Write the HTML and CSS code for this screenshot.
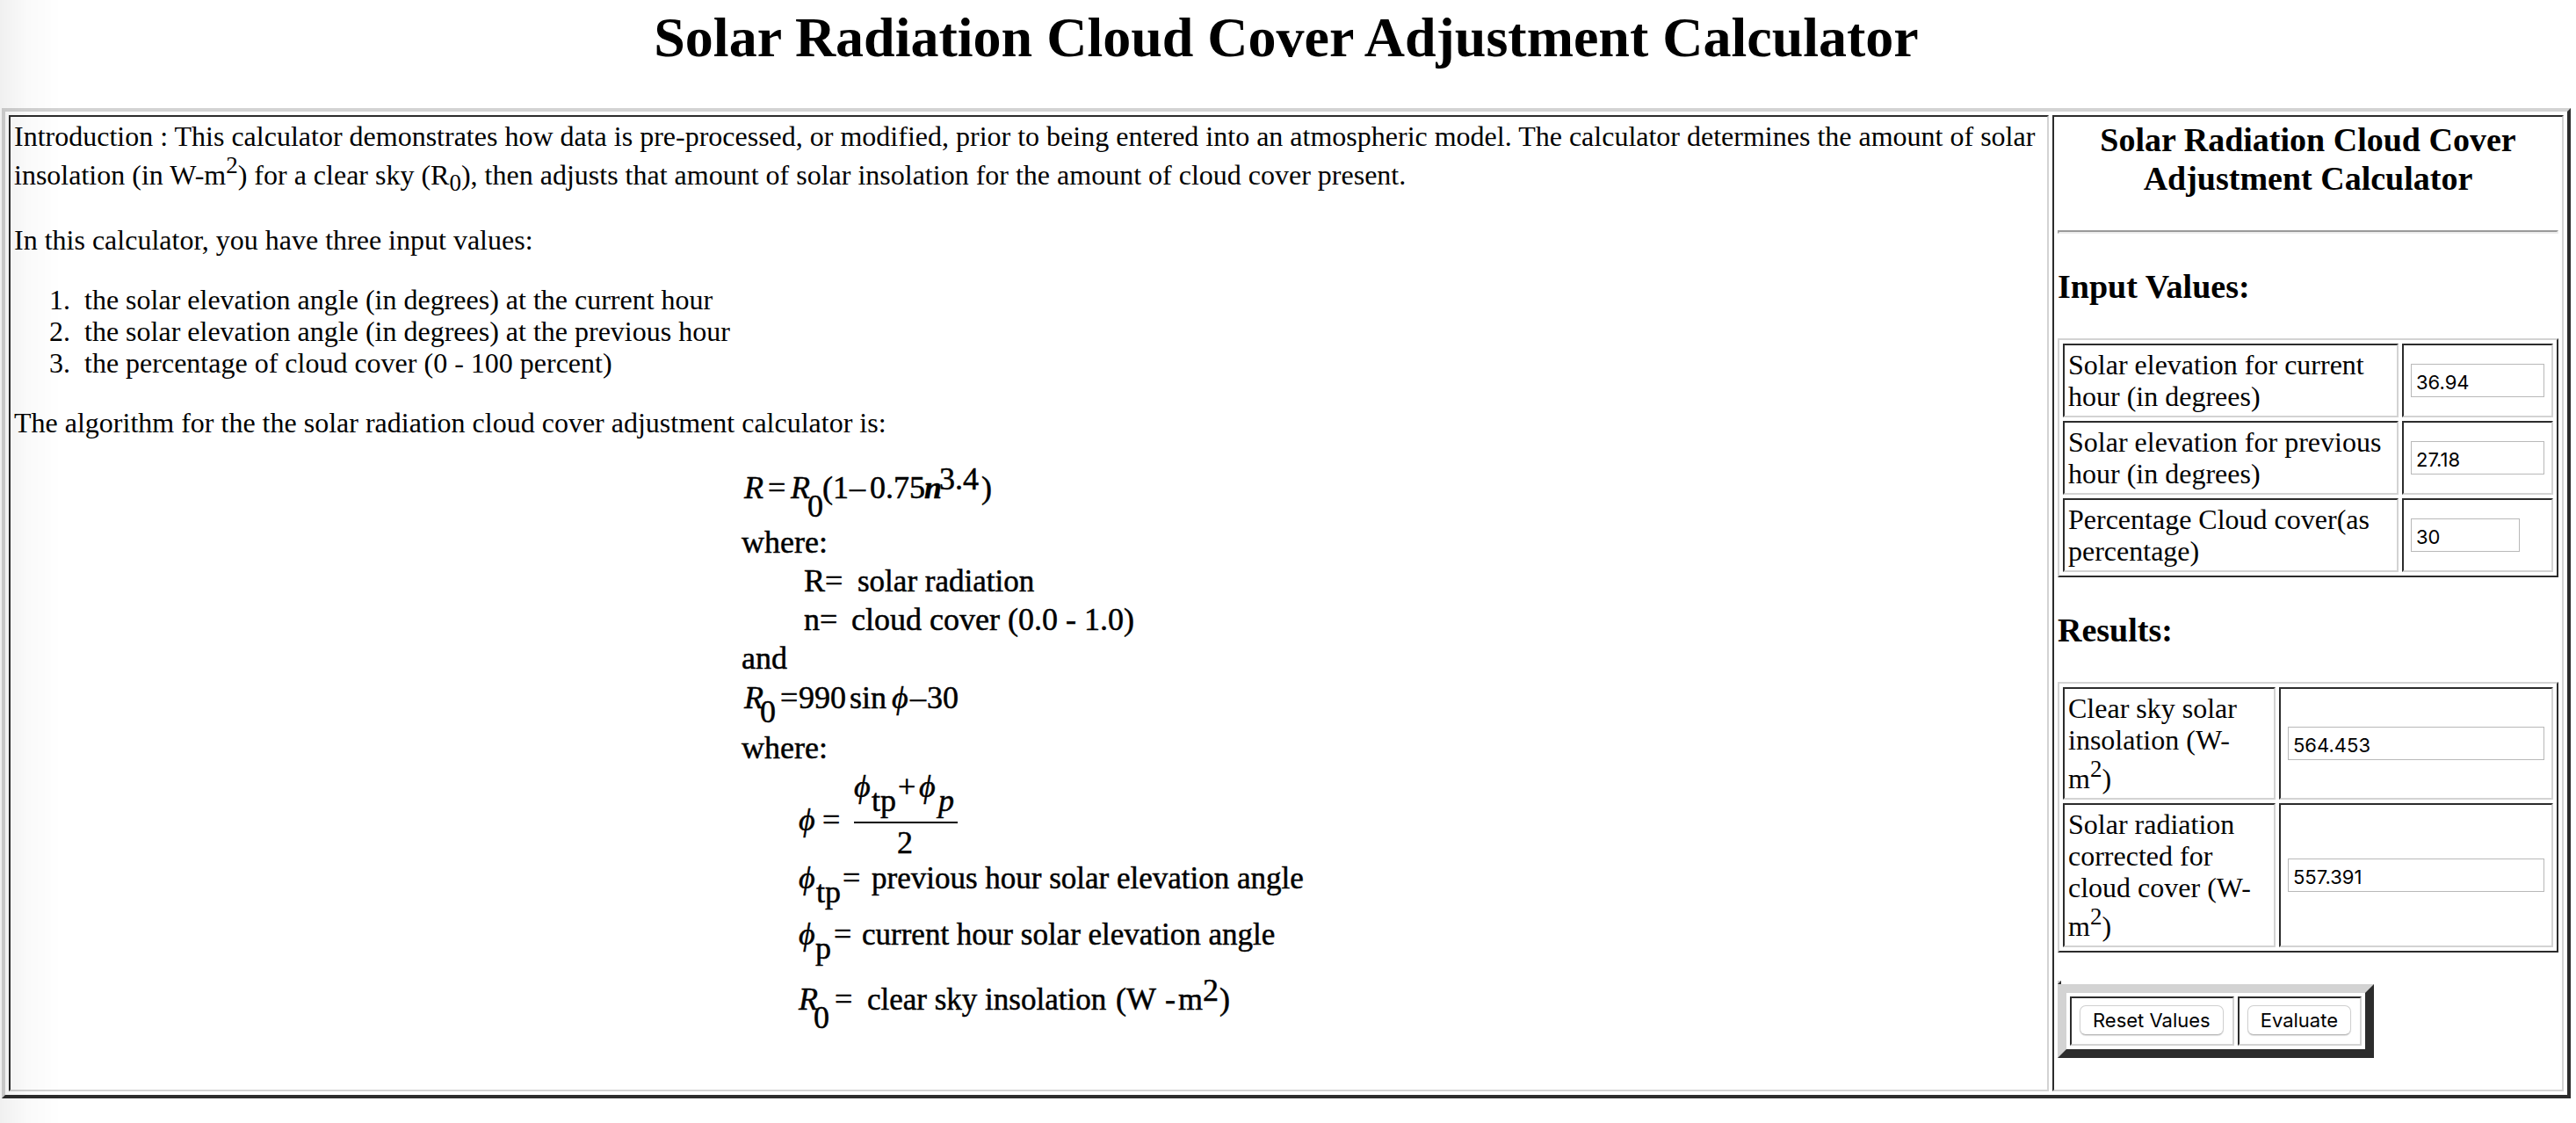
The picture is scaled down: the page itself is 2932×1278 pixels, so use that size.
FILE: index.html
```html
<!DOCTYPE html>
<html lang="en">
<head>
<meta charset="utf-8">
<title>Solar Radiation Cloud Cover Adjustment Calculator</title>
<link rel="stylesheet" href="styles.css">
</head>
<body>
<h1>Solar Radiation Cloud Cover Adjustment Calculator</h1>
<div class="frame">
  <main class="panel">
    <p>Introduction : This calculator demonstrates how data is pre-processed, or modified, prior to being entered into an atmospheric model. The calculator determines the amount of solar insolation (in W-m<sup>2</sup>) for a clear sky (R<sub>0</sub>), then adjusts that amount of solar insolation for the amount of cloud cover present.</p>
    <p>In this calculator, you have three input values:</p>
    <ol>
      <li>the solar elevation angle (in degrees) at the current hour</li>
      <li>the solar elevation angle (in degrees) at the previous hour</li>
      <li>the percentage of cloud cover (0 - 100 percent)</li>
    </ol>
    <p>The algorithm for the the solar radiation cloud cover adjustment calculator is:</p>
    <svg class="formula" width="662" height="660" viewBox="0 0 662 660" role="img" aria-label="Cloud cover adjustment algorithm">
      <g>
        <text x="7" y="36" class="var">R</text><text x="34" y="36">=</text>
        <text x="60" y="36" class="var">R</text><text x="79" y="57">0</text>
        <text x="96" y="36">(1</text><text x="127" y="36">–</text><text x="150" y="36">0.75</text>
        <text x="212" y="36" class="var strong">n</text><text x="229" y="26">3.4</text><text x="277" y="36">)</text>
      </g>
      <text x="4" y="98">where:</text>
      <text x="75" y="142">R=</text><text x="136" y="142" class="phrase">solar radiation</text>
      <text x="75" y="186">n=</text><text x="129" y="186">cloud cover (0.0 - 1.0)</text>
      <text x="4" y="230">and</text>
      <g>
        <text x="7" y="275" class="var">R</text><text x="25" y="291">0</text><text x="48" y="275">=</text>
        <text x="69" y="275">990</text><text x="127" y="275">sin</text><text x="175" y="275" class="var">ϕ</text>
        <text x="196" y="275">–</text><text x="215" y="275">30</text>
      </g>
      <text x="4" y="332">where:</text>
      <g>
        <text x="69" y="414" class="var">ϕ</text><text x="96" y="414">=</text>
        <text x="132" y="376" class="var">ϕ</text><text x="152" y="392">tp</text><text x="182" y="376">+</text>
        <text x="206" y="376" class="var">ϕ</text><text x="228" y="392" class="var">p</text>
        <rect x="132" y="404" width="118" height="2"/>
        <text x="181" y="440">2</text>
      </g>
      <g>
        <text x="69" y="480" class="var">ϕ</text><text x="89" y="496">tp</text><text x="119" y="480">=</text>
        <text x="152" y="480" class="phrase">previous hour solar elevation angle</text>
      </g>
      <g>
        <text x="69" y="544" class="var">ϕ</text><text x="88" y="560">p</text><text x="109" y="544">=</text>
        <text x="141" y="544" class="phrase">current hour solar elevation angle</text>
      </g>
      <g>
        <text x="69" y="618" class="var">R</text><text x="86" y="639">0</text><text x="110" y="618">=</text>
        <text x="147" y="618" class="phrase">clear sky insolation</text><text x="430" y="618">(W</text>
        <text x="486" y="618">-</text><text x="501" y="618">m</text><text x="529" y="608">2</text><text x="548" y="618">)</text>
      </g>
    </svg>
  </main>
  <form class="panel">
    <h3 class="title">Solar Radiation Cloud Cover Adjustment Calculator</h3>
    <hr>
    <h3>Input Values:</h3>
    <table class="grid inputs">
      <tr><td><label for="current">Solar elevation for current hour (in degrees)</label></td><td class="entry"><input id="current" type="text" value="36.94"></td></tr>
      <tr><td><label for="previous">Solar elevation for previous hour (in degrees)</label></td><td class="entry"><input id="previous" type="text" value="27.18"></td></tr>
      <tr><td><label for="cover">Percentage Cloud cover(as percentage)</label></td><td class="entry"><input id="cover" class="short" type="text" value="30"></td></tr>
    </table>
    <h3>Results:</h3>
    <table class="grid results">
      <tr><td><label for="clear">Clear sky solar insolation (W-m<sup>2</sup>)</label></td><td class="entry"><input id="clear" type="text" value="564.453"></td></tr>
      <tr><td><label for="corrected">Solar radiation corrected for cloud cover (W-m<sup>2</sup>)</label></td><td class="entry"><input id="corrected" type="text" value="557.391"></td></tr>
    </table>
    <div class="stub"></div>
    <div class="actions">
      <div class="slot"><button type="reset">Reset Values</button></div>
      <div class="slot"><button type="button">Evaluate</button></div>
    </div>
  </form>
</div>
</body>
</html>
```
FILE: styles.css
```css
:root {
  --light: #d3d3d3;
  --dark: #2c2c2c;
}

* { box-sizing: border-box; }

body {
  margin: 0;
  padding: 6px 6px 28px 2px;
  background: #fff;
  color: #000;
  font: 32px/36px "Liberation Serif", "Times New Roman", serif;
}

/* soft shade along the left edge of the window */
body::after {
  content: "";
  position: fixed;
  inset: 0 auto 0 0;
  width: 70px;
  background: linear-gradient(to right, rgba(0, 0, 0, 0.06), rgba(0, 0, 0, 0.02) 45%, rgba(0, 0, 0, 0));
  pointer-events: none;
}

h1 {
  margin: 0 0 43px;
  font-size: 64px;
  line-height: 74px;
  text-align: center;
}

h3 {
  margin: 38px 0 37px;
  font-size: 38px;
  line-height: 44px;
}

h3.title {
  margin-top: 0;
  text-align: center;
}

p { margin: 0 0 32px; }

ol {
  margin: 0 0 32px;
  padding-left: 80px;
}

li::marker { content: counter(list-item) ".\00a0\00a0"; }

sup, sub {
  font-size: 27px;
  line-height: 30px;
}

sup { vertical-align: 13px; }
sub { vertical-align: -7px; }

.frame {
  display: grid;
  grid-template-columns: minmax(0, 1fr) 582px;
  gap: 4px;
  padding: 4px;
  border: 4px solid;
  border-color: var(--light) var(--dark) var(--dark) var(--light);
}

.panel, td, .slot {
  border: 2px solid;
  border-color: var(--dark) var(--light) var(--light) var(--dark);
  padding: 4px;
}

.formula {
  display: block;
  margin: 0 auto;
  overflow: visible;
  font-size: 36px;
  stroke: #000;
  stroke-width: 0.5px;
}

.formula rect { stroke: none; }
.phrase { font-size: 35px; }
.var { font-style: italic; }
.strong { font-weight: bold; }

hr {
  height: 4px;
  margin: 0;
  border: 2px solid;
  border-color: #9a9a9a #eee #eee #9a9a9a;
}

.grid {
  width: 100%;
  table-layout: fixed;
  border: 2px solid;
  border-color: var(--light) var(--dark) var(--dark) var(--light);
  border-collapse: separate;
  border-spacing: 4px;
}

.inputs .entry { width: 172px; }
.results .entry { width: 312px; }

.entry input {
  display: block;
  width: calc(100% - 8px);
  height: 38px;
  margin: 0 4px;
  padding: 3px 5px 0;
  border: 1px solid #b9b9b9;
  background: #fff;
  color: #000;
  font: 22px/30px Inter, sans-serif;
}

.entry input.short { width: 124px; }

.stub {
  width: 4px;
  margin-top: 32px;
  border: 2px solid;
  border-color: var(--light) var(--dark) var(--dark) var(--light);
}

.actions {
  display: flex;
  gap: 4px;
  width: fit-content;
  margin-bottom: 32px;
  padding: 4px;
  border: 10px solid;
  border-color: var(--light) var(--dark) var(--dark) var(--light);
}

.slot { padding: 8px 10px 10px 9px; }

button {
  display: block;
  height: 34px;
  padding: 0 14px;
  border: 1px solid #d0d0d0;
  border-bottom-color: #b5b5b5;
  border-radius: 7px;
  background: #fff;
  box-shadow: 0 1px 1px rgba(0, 0, 0, 0.12);
  color: #000;
  font: 22px/30px Inter, sans-serif;
}
```
